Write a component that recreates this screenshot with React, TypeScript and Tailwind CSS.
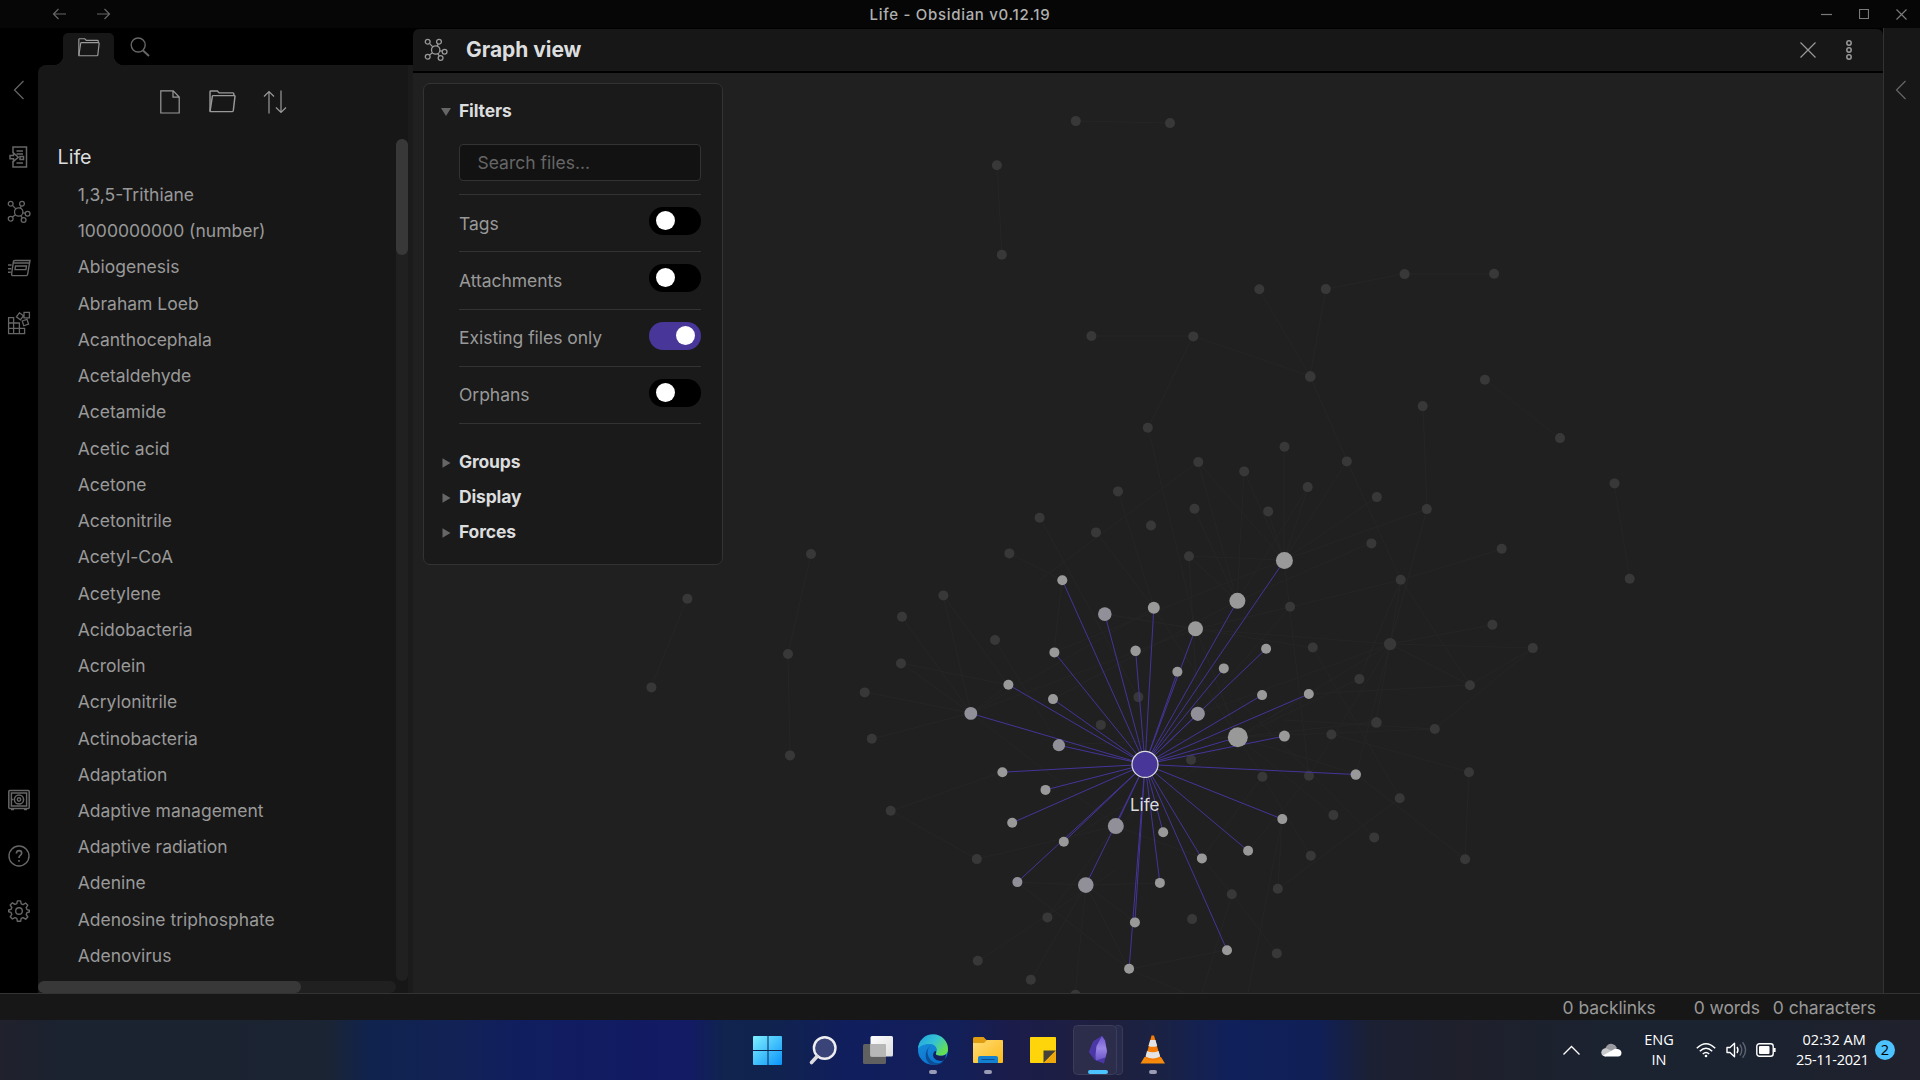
import React from "react";

type P = { children: React.ReactNode; w: number; h: number; className?: string; sw?: number };
const Icon = ({ children, w, h, className = "", sw = 1.2 }: P) => (
  <svg width={w} height={h} viewBox={`0 0 ${w} ${h}`} fill="none" stroke="currentColor" strokeWidth={sw} className={`shrink-0 ${className}`}>
    {children}
  </svg>
);

const FolderIcon = ({ w, h }: { w: number; h: number }) => (
  <svg width={w} height={h} viewBox="0 0 26 24" fill="none" stroke="currentColor" strokeWidth="1.4" preserveAspectRatio="none" className="shrink-0">
    <path d="M1 22.2V1.8q0-.8.8-.8H8l1.8 2H23q.9 0 .9.9V6" />
    <path d="M1 22.4 3.2 6.6q.1-.7.8-.7h20.2q.9 0 .8.8l-1.6 15q-.1.8-.9.8H1.4q-.4 0-.4-.4z" />
  </svg>
);

const GraphIcon = () => (
  <Icon w={24} h={24} sw={1.3}>
    <circle cx="11.7" cy="12" r="4.2" />
    <circle cx="3.7" cy="3.7" r="2.4" />
    <circle cx="15" cy="3.7" r="2.4" />
    <circle cx="20.6" cy="13.7" r="2.4" />
    <circle cx="16.6" cy="20" r="2.4" />
    <circle cx="3.7" cy="18.7" r="2.4" />
    <path d="M5.4 5.4 8.8 8.9M14.2 6 13.2 8.1M16 12.8l2.2.4M13.8 15.6l1.5 2.4M5.4 17l3.1-2.3" />
  </Icon>
);

const Chevron = () => (
  <Icon w={12} h={20}>
    <path d="M10.5 1 1.5 10l9 9" />
  </Icon>
);

const topRibbon = [
  <Icon key="q" w={24} h={24} sw={1.5}>
    <path d="M6 8V2h13.500v20H6v-6M9.500 6h6.500M9.500 9h6.500M13 11.500h3.500v3H13zM9.500 18h6.500" />
    <path d="M3 10.500h3.500V8l4.800 4.200-4.800 4.200v-2.700H3z" />
  </Icon>,
  <GraphIcon key="g" />,
  <Icon key="c" w={24} h={20} sw={1.4}>
    <path d="M6.5 2.8 4.6 16q-.1 1.6 1.4 1.6h13.200q1.2 0 1.4-1.200L23 2.500H7.800q-1.100 0-1.300 1M6.300 5h16M8.500 8h11l-.6 3.600H8zM1 7h3.600M1 10.700h3.200M1 14.300h2.800" />
  </Icon>,
  <Icon key="b" w={24} h={24} sw={1.3}>
    <path d="M1.600 6.600h5v16h-5zM1.600 12h10.800v10.600H1.600zM1.600 17.300h16v5.300h-16zM6.600 12v10.600M12.400 12v10.600M17 1.400h5.400v5.400H17zM12.400 1.800l4 3-3 4-4-3zM15.200 10l4.800-1.600 1.600 4.800-4.800 1.600z" />
  </Icon>,
];

const bottomRibbon = [
  <Icon key="v" w={24} h={24} sw={1.5}>
    <rect x="1.8" y="2.5" width="20.4" height="18" rx="1" />
    <rect x="4.4" y="5" width="15.2" height="13" />
    <circle cx="12" cy="11.5" r="4.6" />
    <circle cx="12" cy="11.5" r="1.7" />
    <path d="M4 21.5h3M17 21.5h3M4.5 11.5h2" />
  </Icon>,
  <Icon key="h" w={24} h={24} sw={1.4}>
    <circle cx="12" cy="12" r="10" />
    <path d="M9.4 9.6q0-3 2.7-3 2.6 0 2.6 2.5 0 1.5-1.6 2.6-1.1.8-1.1 2.4M12 16v1.8" strokeWidth="1.6" />
  </Icon>,
  <Icon key="s" w={24} h={24} sw={1.4}>
    <circle cx="12" cy="12" r="3.3" />
    <path d="M10.4 1.9h3.2l.6 2.9 1.9.8 2.5-1.6 2.2 2.2-1.6 2.5.8 1.9 2.3.6v1.8l-2.3.6-.8 1.9 1.6 2.5-2.2 2.2-2.5-1.6-1.9.8-.6 2.9h-3.2l-.6-2.9-1.9-.8L5.4 20l-2.2-2.2 1.6-2.5-.8-1.9-2.3-.6V11l2.3-.6.8-1.9L3.2 6l2.2-2.2 2.5 1.6 1.9-.8z" strokeLinejoin="round" />
  </Icon>,
];

const files = [
  "1,3,5-Trithiane", "1000000000 (number)", "Abiogenesis", "Abraham Loeb", "Acanthocephala", "Acetaldehyde",
  "Acetamide", "Acetic acid", "Acetone", "Acetonitrile", "Acetyl-CoA", "Acetylene", "Acidobacteria", "Acrolein",
  "Acrylonitrile", "Actinobacteria", "Adaptation", "Adaptive management", "Adaptive radiation", "Adenine",
  "Adenosine triphosphate", "Adenovirus",
];

/* Graph data: [x, y, radius, tinted] in window coordinates */
const HUB: [number, number] = [1145, 764.4];
const linked: [number, number, number, number?][] = [
  [1062.3, 580.2, 5], [1104.8, 614.1, 6.8, 1], [1153.8, 607.8, 6], [1237.4, 600.8, 8], [1284.4, 560.5, 8.5],
  [1195.5, 628.7, 7.5], [1135.6, 650.8, 5.2], [1054.4, 652.4, 5], [1008.4, 684.7, 5], [1053, 699.1, 5],
  [970.8, 713.4, 6.4, 1], [1058.9, 745.2, 6.1, 1], [1177.4, 671.8, 5], [1223.8, 668.4, 5], [1266.1, 648.8, 5],
  [1262.1, 695.1, 5], [1308.8, 694, 5], [1197.8, 713.8, 7.1, 1], [1237.8, 737.2, 10], [1284.4, 736.1, 5.5],
  [1002.4, 772.2, 5], [1045.5, 789.9, 5], [1012.2, 822.8, 5], [1063.8, 841.8, 5], [1115.8, 826.1, 8, 1],
  [1163.2, 832.2, 5], [1017.4, 882.1, 5, 1], [1085.8, 885.1, 7.8, 1], [1134.9, 922.4, 5], [1129.1, 968.8, 5],
  [1159.9, 882.9, 5], [1201.9, 858.4, 5], [1248.1, 850.8, 5], [1282.3, 819.1, 5], [1355.8, 774.5, 5.2], [1227, 950.2, 5],
];

const dim: [number, number, number?][] = [
  [1009.4, 553.4], [1096, 532.4], [1151, 525.5], [1039.6, 517.8], [1189, 556.2], [1371.4, 543.4], [1400.7, 579.8],
  [943.4, 595.4], [902, 616.8], [995, 640], [901, 663.4], [1290.1, 606.8], [1312.8, 647.5], [1390.1, 644.1, 6.2],
  [1359.4, 679.1], [1138.4, 697.1], [1100.8, 724.9], [1376.4, 722.4, 5.3], [1331.4, 734.5], [1191.1, 759.8],
  [1262.4, 776.8], [1309, 775.8], [1399.7, 798.2], [1333.4, 815.1], [1374.2, 837.4], [976.8, 859.1], [1047.4, 917.4],
  [1310.8, 855.8], [1277.8, 888.8], [1231.8, 894.2], [1192.1, 919.1], [1276.8, 953.4], [977.8, 960.8], [1030.8, 979.8],
  [1075.4, 994.8], [1075.8, 121.1], [1170, 123.1], [996.9, 165.3], [1001.8, 254.7], [1259.3, 289.3], [1325.8, 289.1],
  [1404.6, 274.1], [1494.1, 273.8], [1091.4, 336], [1193.3, 336.4], [1310.3, 376.4, 5.3], [1484.9, 379.7],
  [1422.7, 406.1], [1560, 438.1], [1147.8, 427.7], [1284.5, 446.8], [1198.3, 462.1], [1244.2, 471.4], [1307.7, 487.1],
  [1346.8, 461.4], [1118, 491.4], [1376.8, 497.1], [1426.8, 509.1], [1614.5, 483.4], [1194.5, 508.8], [1268.2, 511.4],
  [1501.7, 548.8], [1629.7, 578.8], [1492.4, 624.7], [1532.8, 648.1], [1470, 685.2], [1434.8, 729], [1469, 772.2],
  [1465.1, 859.2], [811, 554], [687.4, 598.7], [788, 654], [651.4, 687.4], [790, 755.4], [864.7, 692.4],
  [871.8, 738.8], [890.7, 810.8],
];

const faint: [number, number, number, number][] = [
  [1076, 121, 1170, 123], [997, 165, 1002, 255], [1259, 289, 1310, 376], [1326, 289, 1310, 376], [1326, 289, 1404, 274],
  [1404, 274, 1494, 274], [1091, 336, 1193, 336], [1193, 336, 1310, 376], [1193, 336, 1148, 428], [1310, 376, 1347, 461],
  [1485, 380, 1560, 438], [1423, 406, 1427, 509], [1614, 483, 1630, 579], [1148, 428, 1196, 629], [1198, 462, 1040, 580],
  [1198, 462, 1237, 601], [1198, 462, 1284, 560], [1244, 471, 1237, 601], [1244, 471, 1284, 560], [1284, 447, 1284, 560],
  [1308, 487, 1284, 560], [1308, 487, 1237, 601], [1347, 461, 1284, 560], [1347, 461, 1401, 580], [1377, 497, 1284, 560],
  [1427, 509, 1284, 560], [1427, 509, 1390, 644], [1371, 543, 1237, 601], [1401, 580, 1237, 620], [1401, 580, 1502, 549],
  [1401, 580, 1390, 644], [1401, 580, 1470, 685], [1401, 580, 1359, 679], [1390, 644, 1492, 625], [1390, 644, 1533, 648],
  [1390, 644, 1470, 685], [1390, 644, 1376, 722], [1390, 644, 1309, 776], [1390, 644, 1196, 629], [1390, 644, 1238, 737],
  [1390, 644, 1198, 714], [1533, 648, 1470, 685], [1533, 648, 1435, 729], [1470, 685, 1309, 694], [1435, 729, 1238, 737],
  [1435, 729, 1284, 720], [1331, 734, 1469, 772], [1469, 772, 1465, 859], [1465, 859, 1356, 774], [1356, 774, 1390, 644],
  [1356, 774, 1238, 737], [1313, 648, 1400, 798], [1400, 798, 1278, 889], [1333, 815, 1238, 737], [1374, 837, 1238, 700],
  [1311, 856, 1238, 737], [1278, 889, 1282, 819], [1232, 894, 1202, 858], [1232, 894, 1277, 953], [1232, 894, 1202, 993],
  [811, 554, 788, 654], [788, 654, 790, 755], [687, 599, 651, 687], [943, 595, 971, 713], [943, 595, 1008, 685],
  [902, 617, 971, 713], [901, 663, 971, 713], [901, 663, 1008, 685], [865, 692, 971, 713], [872, 739, 971, 713],
  [971, 713, 1008, 685], [971, 713, 1196, 629], [971, 713, 1154, 608], [971, 713, 1116, 826], [891, 811, 1002, 772],
  [891, 811, 977, 859], [977, 859, 1116, 826], [978, 961, 1116, 870], [1047, 917, 1116, 826], [1031, 980, 1086, 885],
  [1075, 994, 1086, 885], [1086, 885, 1135, 922], [1086, 885, 1129, 969], [1086, 885, 1017, 882], [1086, 885, 1160, 883],
  [1017, 882, 1129, 969], [1129, 969, 1227, 950], [1129, 969, 1185, 993], [1009, 553, 1062, 580], [1040, 518, 1138, 697],
  [1096, 532, 1154, 608], [1118, 491, 1154, 608], [1194, 509, 1237, 601], [1268, 511, 1284, 560], [1189, 556, 1284, 560],
  [1189, 556, 1198, 714], [1189, 556, 1237, 601], [1290, 607, 1196, 629], [1290, 607, 1198, 714], [1105, 614, 1313, 648],
  [1105, 614, 1196, 629], [995, 640, 1059, 745], [1062, 580, 1054, 652], [1284, 560, 1054, 652], [1237, 601, 1053, 699],
  [1309, 694, 1238, 737], [1359, 679, 1238, 737], [1376, 722, 1238, 737], [1262, 777, 1202, 858], [1191, 760, 1238, 737],
  [1196, 629, 1238, 737], [1154, 608, 1238, 737], [1284, 560, 1309, 776], [1238, 737, 1116, 826], [1116, 826, 1202, 858],
  [1059, 745, 1238, 737], [1310, 776, 1248, 851], [1064, 842, 1238, 737], [1282, 819, 1248, 993],
];

const Graph = () => (
  <svg width="1470" height="920" viewBox="413 73 1470 920" className="block">
    <g stroke="#252526" strokeWidth="1">
      {faint.map(([a, b, c, d], i) => <line key={i} x1={a} y1={b} x2={c} y2={d} />)}
    </g>
    <g fill="#383838">{dim.map(([x, y, r], i) => <circle key={i} cx={x} cy={y} r={r ?? 5} />)}</g>
    <g stroke="#45349a" strokeWidth="1">
      {linked.map(([x, y], i) => <line key={i} x1={HUB[0]} y1={HUB[1]} x2={x} y2={y} />)}
    </g>
    {linked.map(([x, y, r, t], i) => <circle key={i} cx={x} cy={y} r={r} fill={t ? "#919099" : "#999999"} />)}
    <circle cx={HUB[0]} cy={HUB[1]} r="13" fill="#483699" stroke="#dcddde" strokeWidth="1.2" />
    <text x="1144.7" y="811.3" textAnchor="middle" fill="#dcddde" fontSize="17" fontFamily="Inter, sans-serif">Life</text>
  </svg>
);

const Toggle = ({ on }: { on?: boolean }) => (
  <div className={`flex h-7 w-[52px] items-center rounded-full pb-px ${on ? "justify-end bg-[#483699] pr-[6px]" : "bg-black pl-[7px]"}`}>
    <div className="size-[19px] rounded-full bg-white" />
  </div>
);

const Section = ({ label, open }: { label: string; open?: boolean }) => (
  <div className="flex h-[35px] items-center text-[17.5px] font-bold tracking-[-0.15px] text-[#dcddde]">
    <svg width="18" height="12" viewBox="0 0 18 12" fill="#666" className="shrink-0">
      <path d={open ? "M0 2h10L5 10z" : "M1.5 1.2 9.5 6l-8 4.8z"} />
    </svg>
    {label}
  </div>
);

const App = () => (
  <div className="flex h-[1080px] w-[1920px] flex-col overflow-hidden bg-black font-['Inter',sans-serif] text-[#999]">
    <div className="flex h-7 shrink-0 items-center justify-between bg-[#060606] text-[#7a7a7a]">
      <div className="flex w-[400px] items-center gap-[31px] pl-[52px] text-[#666]">
        <Icon w={14} h={12}><path d="M14 6H1.5M6.5 1l-5 5 5 5" /></Icon>
        <Icon w={14} h={12}><path d="M0 6h12.5M7.5 1l5 5-5 5" /></Icon>
      </div>
      <div className="pt-[2px] text-[15px] font-medium tracking-[0.7px] text-[#b0b0b0]">Life - Obsidian v0.12.19</div>
      <div className="flex w-[400px] items-center justify-end gap-[27px] pr-[13px]">
        <Icon w={11} h={12}><path d="M0 6.5h11" /></Icon>
        <Icon w={10} h={10}><path d="M.5.5h9v9h-9z" /></Icon>
        <Icon w={11} h={11}><path d="M.5.5l10 10M10.500.5l-10 10" /></Icon>
      </div>
    </div>

    <div className="flex h-[965px] shrink-0">
      <div className="flex w-[38px] shrink-0 flex-col bg-black pt-[34px] pb-[54px] text-[#666]">
        <div className="flex h-[56px] items-center justify-center"><Chevron /></div>
        <div className="mt-[11px] flex flex-col">
          {topRibbon.map((ic, i) => <div key={i} className="flex h-[55.5px] items-center justify-center">{ic}</div>)}
        </div>
        <div className="mt-auto flex flex-col">
          {bottomRibbon.map((ic, i) => <div key={i} className="flex h-[55.5px] items-center justify-center">{ic}</div>)}
        </div>
      </div>

      <div className="flex w-[370px] shrink-0 flex-col">
        <div className="flex h-[37px] items-end bg-black pl-[15px]">
          <div className="size-[10px] bg-[radial-gradient(circle_at_0_0,transparent_10px,#171717_10.500px)]" />
          <div className="flex h-8 w-[51px] items-center justify-center rounded-t-[5px] bg-[#171717] pb-[3px] text-[#999]"><FolderIcon w={22} h={19} /></div>
          <div className="size-[10px] bg-[radial-gradient(circle_at_100%_0,transparent_10px,#171717_10.500px)]" />
          <div className="flex h-8 items-center pb-[4px] pl-[6px] text-[#666]">
            <Icon w={20} h={20} sw={1.4}><circle cx="8.200" cy="8" r="7" /><path d="m13 13.500 6 5.500" strokeWidth="2" /></Icon>
          </div>
        </div>
        <div className="flex flex-1 flex-col rounded-tl-[8px] bg-[#171717]">
          <div className="flex h-[74px] items-center pb-px pl-[122px] text-[#999]">
            <Icon w={20} h={24}><path d="M.8.8h12.400l6 6.200v16H.8zM13 .8v6.400h6" /></Icon>
            <span className="ml-[29px]"><FolderIcon w={27} h={23} /></span>
            <Icon w={24} h={24} className="ml-[27px]"><path d="M6 23.500V1.500M1 6.500l5-5 5 5M18 .5v22M13 17.500l5 5 5-5" /></Icon>
          </div>
          <div className="flex h-[842px]">
            <div className="min-w-0 flex-1 overflow-hidden whitespace-nowrap">
              <div className="flex h-[38px] items-center pt-[0.5px] pl-[19.500px] text-[19.700px] text-[#dcddde]">Life</div>
              {files.map((f) => (
                <div key={f} className="flex h-[36.240px] items-center pl-[39.700px] text-[17.500px] text-[#999]">{f}</div>
              ))}
            </div>
            <div className="w-3 rounded-full bg-[#202020]"><div className="h-[116px] rounded-full bg-[#383838]" /></div>
          </div>
          <div className="h-3 w-[358px] rounded-full bg-[#202020]"><div className="h-3 w-[263px] rounded-full bg-[#383838]" /></div>
        </div>
      </div>
      <div className="flex w-[5px] shrink-0 flex-col"><div className="h-[37px] bg-black" /><div className="flex-1 bg-[#1b1b1b]" /></div>

      <div className="flex w-[1470px] shrink-0 flex-col bg-black pt-px">
        <div className="flex h-[42px] items-center rounded-t-[6px] bg-[#171717] pl-[11px] text-[#999]">
          <GraphIcon />
          <div className="pl-[18px] text-[21px] font-bold tracking-[-0.05px] text-[#dcddde]">Graph view</div>
          <div className="ml-auto flex items-center gap-[30px] pr-[31px]">
            <Icon w={16} h={16}><path d="m.5.5 15 15M15.500.5l-15 15" /></Icon>
            <Icon w={6} h={20} sw={1.5}><circle cx="3" cy="3" r="2.200" /><circle cx="3" cy="10" r="2.200" /><circle cx="3" cy="17" r="2.200" /></Icon>
          </div>
        </div>
        <div className="relative mt-[2px] h-[920px] overflow-hidden bg-[#202020]">
          <Graph />
          <div className="absolute top-[10px] left-[10px] h-[482px] w-[300px] rounded-[7px] border border-[#333] bg-[#1a1a1a] pt-[10px] pr-[21px] pl-[17px]">
            <Section label="Filters" open />
            <div className="pl-[18px]">
              <div className="mt-[15px] flex h-[37px] items-center rounded-[4px] border border-[#333] bg-[#121212] pt-[2px] pl-[17.500px] text-[17.500px] text-[#666]">Search files...</div>
              <div className="mt-[13px] border-t border-[#333]">
                {["Tags", "Attachments", "Existing files only", "Orphans"].map((l) => (
                  <div key={l} className="flex h-[57.250px] justify-between border-b border-[#333] pt-[12px] text-[17.500px] tracking-[-0.04px]">
                    <div className="pt-[3.600px]">{l}</div>
                    <Toggle on={l === "Existing files only"} />
                  </div>
                ))}
              </div>
            </div>
            <div className="mt-[21px]">
              <Section label="Groups" />
              <Section label="Display" />
              <Section label="Forces" />
            </div>
          </div>
        </div>
      </div>

      <div className="flex flex-1 flex-col items-center border-l border-[#333] bg-[#171717] pt-[52px] pr-[2px] text-[#666]"><Chevron /></div>
    </div>

    <div className="flex h-[27px] shrink-0 items-center justify-end border-t border-[#333] bg-[#171717] pt-[2px] pr-[44px] text-[17.500px] tracking-[-0.08px] text-[#999]">
      <span className="mr-[38px]">0 backlinks</span>
      <span className="mr-[13px]">0 words</span>
      <span>0 characters</span>
    </div>

    <div className="flex h-[60px] shrink-0 items-center bg-[linear-gradient(90deg,#20212c_0px,#1b2230_60px,#1b2432_325px,#10234e_370px,#122256_460px,#101e5f_520px,#121b62_640px,#121b64_690px,#10244e_725px,#10224f_780px,#101e5e_850px,#131f58_960px,#1b1c4a_1010px,#1f203e_1110px,#1a2244_1160px,#10205a_1230px,#101f56_1320px,#1b2033_1370px,#1f202c_1460px,#1b2230_1600px,#1b2230_1750px,#20212c_1920px)] font-['Open_Sans',sans-serif] text-white">
      <div className="flex flex-1 items-center pl-[753px]">
        <svg width="413" height="50" viewBox="753 1025 413 50" className="shrink-0">
          <defs>
            <linearGradient id="win" x1="0" y1="0" x2="1" y2="1"><stop stopColor="#7df0ff" /><stop offset="1" stopColor="#0a93fa" /></linearGradient>
            <linearGradient id="tv" x1="0" y1="0" x2="1" y2="1"><stop stopColor="#fff" /><stop offset="1" stopColor="#ddd" /></linearGradient>
            <linearGradient id="edgeTop" x1="0" y1="0" x2="1" y2=".6"><stop stopColor="#1ea0e0" /><stop offset=".55" stopColor="#35c3d4" /><stop offset="1" stopColor="#65e04f" /></linearGradient>
            <linearGradient id="edgeLow" x1="0" y1="0" x2=".4" y2="1"><stop stopColor="#1a93dc" /><stop offset="1" stopColor="#0b74d0" /></linearGradient>
            <linearGradient id="fold" x1="0" y1="0" x2="1" y2="1"><stop stopColor="#ffdc74" /><stop offset="1" stopColor="#fbb919" /></linearGradient>
            <linearGradient id="obs" x1="0" y1="0" x2="0" y2="1"><stop stopColor="#6b55cc" /><stop offset=".5" stopColor="#9a86e6" /><stop offset="1" stopColor="#6a54c8" /></linearGradient>
          </defs>
          <path fill="url(#win)" d="M754 1036h13.500v14H753v-13q0-1 1-1zM768.500 1036H781q1 0 1 1v13h-13.500zM753 1051h14.500v14H754q-1 0-1-1zM768.500 1051H782v13q0 1-1 1h-12.500z" />
          <circle cx="824.700" cy="1048" r="10.800" fill="#3a4478" stroke="#efeff2" strokeWidth="2.400" />
          <path d="m817 1056.500-5.500 6" stroke="#dcdce0" strokeWidth="3.600" strokeLinecap="round" />
          <rect x="863" y="1044" width="23" height="20" rx="1.500" fill="#606060" />
          <rect x="870.500" y="1036" width="22.500" height="20.500" rx="1.500" fill="url(#tv)" />
          <path d="M870.500 1044H885q1 0 1 1v11.500h-15.500z" fill="#b7b7b7" />
          <circle cx="933" cy="1050" r="15" fill="url(#edgeLow)" />
          <path d="M918 1049a15 15 0 0 1 30 .5c0 4-3.500 6.500-7.500 6.300-3.500 0-5.500-1.200-4.500-2.800 2.500-4-.5-8.500-5.500-9-6-.6-11 2-12.500 5z" fill="url(#edgeTop)" />
          <path d="M931 1045.500c-5 3.500-4.500 11 1 15.500 4 3.200 9.500 2.800 12.700-.6a15 15 0 0 1-11 4.600c-9-.5-11-14-2.700-19.500z" fill="#0d4f96" />
          <path d="M936 1053c-1 1.600 1 2.800 4.500 2.800 2 .1 4-.4 5.500-1.500-.3 2.500-.7 4.200-1.500 5.700-4 2-10 .5-11.200-3.500-.6-2 .5-5 2-5.500.7 0 1.200 1 .7 2z" fill="#141f5c" />
          <path d="M973 1038.500q0-1.500 1.500-1.500h9l3 3H1001q2 0 2 2v3h-30z" fill="#e09d12" />
          <path d="M973 1043h11l3-3h15q1 0 1 1v21q0 1-1 1h-28q-1 0-1-1z" fill="url(#fold)" />
          <path d="M978 1063v-5q0-2 2-2h16q2 0 2 2v5z" fill="#1380d0" />
          <path d="M981.500 1059.500h13" stroke="#0a4f96" />
          <rect x="1030" y="1037" width="26" height="26" rx=".8" fill="#fdd50a" />
          <path d="M1043.500 1063v-12.500h12.500z" fill="#45413a" />
          <path d="m1043.500 1063 12.500-12.500V1063z" fill="#eda90b" />
          <path d="M1116 1025.500h3q3.500 0 3.500 3.500v42q0 3.500-3.500 3.500h-3" fill="#282b4c" stroke="#383b58" />
          <rect x="1073.500" y="1025.500" width="43" height="49" rx="4" fill="#2b2d4b" stroke="#3b3d5a" />
          <path d="M1102 1036l3 4.500 2 11-3 12-9-3.500-6-8 4-10.500z" fill="#4a36a4" />
          <path d="M1102 1036l3 4.500 2 11-1.500 6-9.500 3-1.500-9 1-8z" fill="url(#obs)" />
          <path d="M1102 1036l-8.700 5.500-4.300 10.500 6 8 1.500-14z" fill="#4b37a6" />
          <rect x="1088" y="1070" width="20" height="4" rx="2" fill="#4cc2ff" />
          <path d="M1144.500 1057h16.500l4 6.500h-24.500z" fill="#f48b0c" />
          <path d="M1151.500 1035.500h2.500l6.500 23q-7.500 4.500-15 0z" fill="#f57c06" />
          <path d="m1150.200 1040-1.800 6q4.300 1.700 8.800 0l-1.700-6zM1147 1051l-1.500 5.500q7.500 3.800 14.700 0l-1.600-5.500q-5.800 2.500-11.600 0z" fill="#e4e4e4" />
          <g fill="#9a9bb4"><rect x="929" y="1070" width="8" height="4" rx="2" /><rect x="984" y="1070" width="8" height="4" rx="2" /><rect x="1149" y="1070" width="8" height="4" rx="2" /></g>
        </svg>
      </div>
      <div className="flex items-center pr-[25px]">
        <Icon w={17} h={10} sw={1.3}><path d="m.5 9.500 8-8 8 8" /></Icon>
        <svg width="21" height="14" viewBox="0 0 21 14" className="ml-[21px]">
          <path d="M4.500 5Q7 0 11.500 1q3 .6 4.500 4l-4 4H2z" fill="#9a9ba0" />
          <path d="M4 13.500Q.3 13 .3 9.300.5 5.500 5 5.200l7 3.300-7.500 5z" fill="#c8c9cc" />
          <path d="M2 12.500 14 5.800q6.200 0 6.500 4 0 3.500-3.500 3.700H4.500z" fill="#fff" />
        </svg>
        <div className="ml-[21px] w-[32px] text-center text-[14.500px] leading-[20px]"><div>ENG</div><div>IN</div></div>
        <Icon w={20} h={16} sw={1.500} className="ml-[21px]">
          <path d="M.8 6.200q9.200-9 18.400 0M3.800 9.200q6.200-6 12.400 0M6.800 12q3.200-3 6.400 0" />
          <circle cx="10" cy="14" r="1.300" fill="currentColor" stroke="none" />
        </Icon>
        <Icon w={21} h={18} sw={1.400} className="ml-[10px]">
          <path d="M1 6.500h3l4.500-4.200v13.400L4 11.500H1zM11 6q2 3 0 6" strokeLinejoin="round" />
          <path d="M13.800 3.500q4 5.500 0 11M16.600 1.200q6 7.800 0 15.600" stroke="#5c6370" />
        </Icon>
        <Icon w={21} h={14} sw={1.400} className="ml-[9px]">
          <rect x=".8" y=".8" width="16.400" height="12.400" rx="2.500" />
          <rect x="3" y="3" width="10.500" height="8" rx="1" fill="currentColor" stroke="none" />
          <path d="M18.500 5v4" strokeWidth="2.200" />
        </Icon>
        <div className="ml-[19px] w-[70px] text-right text-[14.500px] leading-[20px] whitespace-nowrap"><div className="tracking-[0.08px]">02:32 AM</div><div className="tracking-[-0.300px]">25-11-2021</div></div>
        <div className="ml-[9px] flex size-5 items-center justify-center rounded-full bg-[#4cc2ff] pt-px text-[14.500px] leading-none text-black">2</div>
      </div>
    </div>
  </div>
);

export default App;
